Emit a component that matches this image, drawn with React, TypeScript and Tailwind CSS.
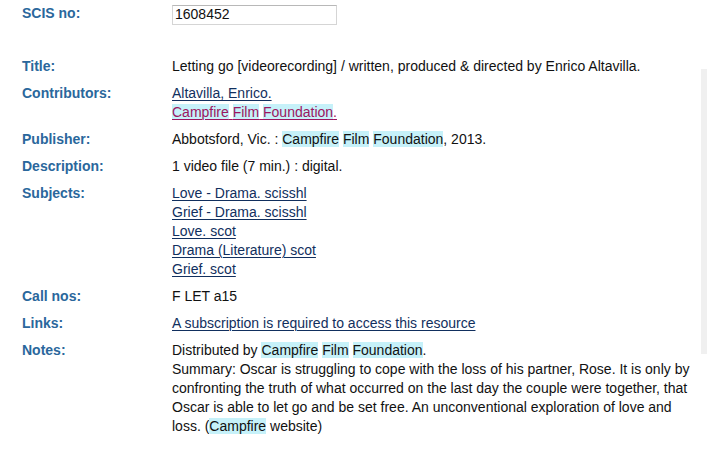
const Hl = ({ children }: { children: React.ReactNode }) => (
  <span className="bg-[#c6f1f9]">{children}</span>
);

const Row = ({
  label,
  children,
}: {
  label: string;
  children: React.ReactNode;
}) => (
  <div className="flex mb-2">
    <div className="w-[150px] shrink-0 font-bold text-[#2a679c]">{label}</div>
    <div className="flex-1">{children}</div>
  </div>
);

const link = "underline text-[#112f5e] decoration-1 underline-offset-[2px]";

export default function App() {
  return (
    <div
      className="relative w-[707px] h-[466px] bg-white text-[14px] leading-[19px] text-[#111] overflow-hidden"
      style={{ fontFamily: '"Liberation Sans", Arial, sans-serif' }}
    >
      {/* scrollbar strip */}
      <div className="absolute right-0 top-[69px] w-[6px] h-[285px] bg-[#f0f0f0]" />

      <div className="relative pl-[22px] pt-[4px] pr-[4px]">
        <div className="flex h-[19px] mb-[34px]">
          <div className="w-[150px] shrink-0 font-bold text-[#2a679c]">SCIS no:</div>
          <div className="w-[165px] h-[20px] mt-[1px] border border-[#d5d5d5] border-t-[#b8b8b8] px-[2px] leading-[17px]">
            1608452
          </div>
        </div>

        <Row label="Title:">
          Letting go [videorecording] / written, produced &amp; directed by Enrico Altavilla.
        </Row>
        <Row label="Contributors:">
          <div>
            <a className={link}>Altavilla, Enrico.</a>
          </div>
          <div>
            <a className="underline text-[#9b1660] decoration-1 underline-offset-[2px]">
              <Hl>Campfire</Hl> <Hl>Film</Hl> <Hl>Foundation</Hl>.
            </a>
          </div>
        </Row>
        <Row label="Publisher:">
          Abbotsford, Vic. : <Hl>Campfire</Hl> <Hl>Film</Hl> <Hl>Foundation</Hl>, 2013.
        </Row>
        <Row label="Description:">1 video file (7 min.) : digital.</Row>
        <Row label="Subjects:">
          {[
            "Love - Drama. scisshl",
            "Grief - Drama. scisshl",
            "Love. scot",
            "Drama (Literature) scot",
            "Grief. scot",
          ].map((s) => (
            <div key={s}>
              <a className={link}>{s}</a>
            </div>
          ))}
        </Row>
        <Row label="Call nos:">F LET a15</Row>
        <Row label="Links:">
          <a className={link}>A subscription is required to access this resource</a>
        </Row>
        <Row label="Notes:">
          <div>
            Distributed by <Hl>Campfire</Hl> <Hl>Film</Hl> <Hl>Foundation</Hl>.
          </div>
          <div>
            Summary: Oscar is struggling to cope with the loss of his partner, Rose. It is only by
            confronting the truth of what occurred on the last day the couple were together, that
            Oscar is able to let go and be set free. An unconventional exploration of love and
            loss. (<Hl>Campfire</Hl> website)
          </div>
        </Row>
      </div>
    </div>
  );
}
